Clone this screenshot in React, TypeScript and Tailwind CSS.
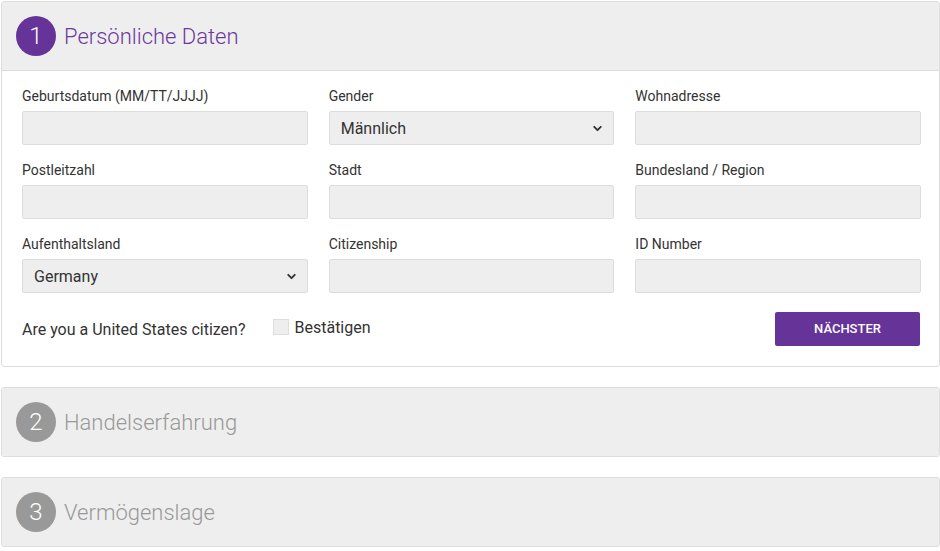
import React from 'react';
import { ChevronDown } from 'lucide-react';

const Field: React.FC<{ label: string; select?: string }> = ({ label, select }) => (
  <div className="flex flex-col">
    <label className="text-[14px] leading-5 text-[#333] mb-[5px]">{label}</label>
    {select ? (
      <div className="relative h-[34px] bg-[#eeeeee] border border-[#dddddd] rounded-[2px] flex items-center pl-[11px] text-[16px] text-[#333]">
        <span className="mt-[1px]">{select}</span>
        <ChevronDown className="absolute right-[9px] top-[10px] h-[13px] w-[13px] text-[#333]" strokeWidth={3.5} />
      </div>
    ) : (
      <div className="h-[34px] bg-[#eeeeee] border border-[#dddddd] rounded-[2px]" />
    )}
  </div>
);

const StepHeader: React.FC<{ n: number; title: string; active?: boolean }> = ({ n, title, active }) => (
  <div className="h-[68px] bg-[#eeeeee] flex items-center pl-[14px]">
    <div
      className={`w-10 h-10 rounded-full flex items-center justify-center text-white text-[24px] font-light ${
        active ? 'bg-[#663399]' : 'bg-[#999999]'
      }`}
    >
      {n}
    </div>
    <span className={`ml-2 text-[22px] font-light ${active ? 'text-[#6b3a9e]' : 'text-[#999999]'}`}>{title}</span>
  </div>
);

export default function App() {
  return (
    <div className="w-[940px] h-[551px] bg-white pt-px pl-px font-['Roboto',sans-serif]">
      <div className="border border-[#dddddd] rounded-[3px] overflow-hidden">
        <div className="border-b border-[#dddddd]">
          <StepHeader n={1} title="Persönliche Daten" active />
        </div>
        <div className="pl-[20px] pr-[18px] pt-[15px] pb-[20px]">
          <div className="grid grid-cols-3 gap-x-[21px] gap-y-[15px]">
            <Field label="Geburtsdatum (MM/TT/JJJJ)" />
            <Field label="Gender" select="Männlich" />
            <Field label="Wohnadresse" />
            <Field label="Postleitzahl" />
            <Field label="Stadt" />
            <Field label="Bundesland / Region" />
            <Field label="Aufenthaltsland" select="Germany" />
            <Field label="Citizenship" />
            <Field label="ID Number" />
          </div>
          <div className="flex items-center mt-[19px]">
            <span className="text-[16px] text-[#333] mt-[2px]">Are you a United States citizen?</span>
            <span className="ml-[28px] w-4 h-4 bg-[#eeeeee] border border-[#dddddd] mt-[-4px]" />
            <span className="ml-[5px] text-[16px] text-[#333] mt-[-3px]">Bestätigen</span>
            <button className="ml-auto mr-px w-[145px] h-[34px] bg-[#663399] rounded-[2px] text-white text-[13px] font-medium">
              NÄCHSTER
            </button>
          </div>
        </div>
      </div>
      <div className="mt-[20px] border border-[#dddddd] rounded-[3px] overflow-hidden">
        <StepHeader n={2} title="Handelserfahrung" />
      </div>
      <div className="mt-[20px] border border-[#dddddd] rounded-[3px] overflow-hidden">
        <StepHeader n={3} title="Vermögenslage" />
      </div>
    </div>
  );
}
